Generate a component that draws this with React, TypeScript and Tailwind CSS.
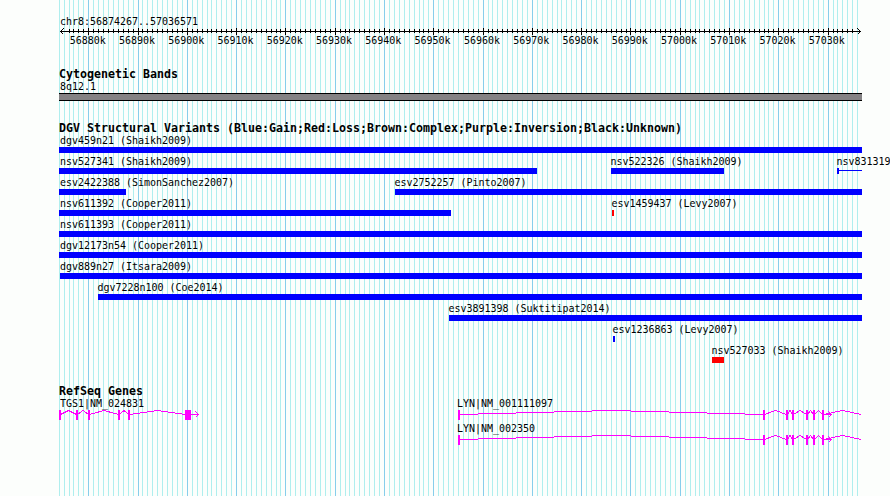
import type { ReactNode } from 'react'

const START = 56874267
const END = 57036571
const LEFT = 60
const PX_PER_BP = 800 / (END - START)

const toX = (pos: number) => Math.round(LEFT + (pos - START) * PX_PER_BP)

// one tick per kilobase, a major one every ten
const ticks: { kb: number; x: number; major: boolean }[] = []
for (let kb = 56874; kb <= 57036; kb++) {
  ticks.push({ kb, x: toX(kb * 1000), major: kb % 10 === 0 })
}

type Variant = {
  label: string
  from: number
  to: number
  loss?: boolean
  thin?: boolean
}

const variantRows: Variant[][] = [
  [{ label: 'dgv459n21 (Shaikh2009)', from: 59, to: 862 }],
  [
    { label: 'nsv527341 (Shaikh2009)', from: 59, to: 537 },
    { label: 'nsv522326 (Shaikh2009)', from: 611, to: 724 },
    { label: 'nsv831319', from: 837, to: 862, thin: true },
  ],
  [
    { label: 'esv2422388 (SimonSanchez2007)', from: 59, to: 126 },
    { label: 'esv2752257 (Pinto2007)', from: 395, to: 862 },
  ],
  [
    { label: 'nsv611392 (Cooper2011)', from: 59, to: 451 },
    { label: 'esv1459437 (Levy2007)', from: 612, to: 614, loss: true },
  ],
  [{ label: 'nsv611393 (Cooper2011)', from: 59, to: 862 }],
  [{ label: 'dgv12173n54 (Cooper2011)', from: 59, to: 862 }],
  [{ label: 'dgv889n27 (Itsara2009)', from: 60, to: 862 }],
  [{ label: 'dgv7228n100 (Coe2014)', from: 98, to: 862 }],
  [{ label: 'esv3891398 (Suktitipat2014)', from: 449, to: 862 }],
  [{ label: 'esv1236863 (Levy2007)', from: 613, to: 615 }],
  [{ label: 'nsv527033 (Shaikh2009)', from: 712, to: 724, loss: true }],
]

type GeneModel = {
  label: string
  exons: [number, number][]
  arrow: number
  tail?: number
}

const lynExons: [number, number][] = [
  [458, 460], [763, 765], [786, 788], [792, 794], [806, 808], [813, 815], [822, 824],
]

const tgs1: GeneModel = {
  label: 'TGS1|NM_024831',
  exons: [[59, 61], [76, 78], [88, 90], [118, 120], [128, 130], [185, 191]],
  arrow: 199,
}

const geneRows: { left?: GeneModel; right: GeneModel }[] = [
  { left: tgs1, right: { label: 'LYN|NM_001111097', exons: lynExons, arrow: 832, tail: 861 } },
  { right: { label: 'LYN|NM_002350', exons: lynExons, arrow: 832, tail: 861 } },
]

function Label({ children }: { children: ReactNode }) {
  return (
    <div className="h-[13px] origin-[0_10px] scale-y-[1.1] text-[10px] leading-[13px] tracking-[-0.02px] whitespace-pre">
      {children}
    </div>
  )
}

function TrackTitle({ children }: { children: ReactNode }) {
  return (
    <h2 className="h-3 text-[11.63px] leading-3 font-bold whitespace-pre">
      {children}
    </h2>
  )
}

function GridLines() {
  return (
    <svg className="absolute inset-0" width="890" height="496" shapeRendering="crispEdges">
      {ticks.map((t) => (
        <rect key={t.kb} x={t.x} y={0} width={1} height={496} fill={t.major ? '#87ceeb' : '#afeeee'} />
      ))}
    </svg>
  )
}

function Ruler() {
  return (
    <div className="flex flex-col pt-[15px]">
      <div className="pl-px">
        <Label>chr8:56874267..57036571</Label>
      </div>
      <svg width="803" height="6" viewBox="59 0 803 6" overflow="visible" shapeRendering="crispEdges">
        <rect x={60} y={3} width={801} height={1} />
        {ticks.slice(2, -1).map((t) => (
          <rect key={t.kb} x={t.x} y={t.major ? 0 : 1} width={1} height={t.major ? 7 : 4} />
        ))}
        <path d="M63.5 0.5L60.5 3.5L63.5 6.5M857.5 0.5L860.5 3.5L857.5 6.5" fill="none" stroke="#000" />
      </svg>
      <div className="flex pl-1">
        {ticks.filter((t) => t.major).map((t) => (
          <div key={t.kb} className="flex w-[49.29px] shrink-0 justify-center">
            <Label>{t.kb}k</Label>
          </div>
        ))}
      </div>
    </div>
  )
}

function VariantGlyph({ variant: v }: { variant: Variant }) {
  return (
    <div className="absolute inset-y-0" style={{ left: v.from - 59, width: v.to - v.from }}>
      <div className={v.from === 59 ? 'pl-px' : v.from > 60 ? '-ml-[0.5px]' : ''}>
        <Label>{v.label}</Label>
      </div>
      {v.thin ? (
        <div className="h-1.5 border-l-2 border-[#0000ff] pt-0.5">
          <div className="h-px bg-[#0000ff]" />
        </div>
      ) : (
        <div className={`h-1.5 ${v.loss ? 'bg-[#ff0000]' : 'bg-[#0000ff]'}`} />
      )}
    </div>
  )
}

function Gene({ gene }: { gene: GeneModel }) {
  const last = gene.exons[gene.exons.length - 1]
  const introns = gene.exons.slice(1).map(([from], i) => [gene.exons[i][1], from])
  if (gene.tail) introns.push([last[1], gene.tail])

  return (
    <g>
      {introns.map(([a, b]) => (
        <polyline
          key={a}
          points={`${a - 0.5},4.5 ${(a + b) / 2},0.5 ${b + 0.5},4.5`}
          fill="none"
          stroke="#ff00ff"
        />
      ))}
      {gene.exons.map(([a, b]) => (
        <rect key={a} x={a} y={0} width={b - a} height={10} fill="#ff00ff" />
      ))}
      <rect x={last[1]} y={4} width={gene.arrow - last[1]} height={1} fill="#ff00ff" />
      <path
        d={`M${gene.arrow - 3.5} 1.5L${gene.arrow - 0.5} 4.5L${gene.arrow - 3.5} 7.5`}
        fill="none"
        stroke="#ff00ff"
      />
    </g>
  )
}

function GeneRow({ left, right }: { left?: GeneModel; right: GeneModel }) {
  return (
    <div className="flex h-[25px] flex-col">
      <div className="flex">
        <div className="w-[398px] pl-px">
          {left && <Label>{left.label}</Label>}
        </div>
        <Label>{right.label}</Label>
      </div>
      <svg width="803" height="10" viewBox="59 0 803 10" shapeRendering="crispEdges">
        {left && <Gene gene={left} />}
        <Gene gene={right} />
      </svg>
    </div>
  )
}

export default function App() {
  return (
    <div className="relative h-[496px] w-[890px] overflow-hidden bg-[#fcfefc] font-['DejaVu_Sans_Mono',monospace] text-black">
      <GridLines />
      <main className="relative ml-[59px] flex w-[803px] flex-col">
        <Ruler />

        <section className="mt-[21px]">
          <TrackTitle>Cytogenetic Bands</TrackTitle>
          <div className="pl-px">
            <Label>8q12.1</Label>
          </div>
          <div className="h-2 border-y border-black bg-[#848284]" />
        </section>

        <section className="mt-[21px]">
          <TrackTitle>DGV Structural Variants (Blue:Gain;Red:Loss;Brown:Complex;Purple:Inversion;Black:Unknown)</TrackTitle>
          {variantRows.map((items) => (
            <div key={items[0].label} className="relative h-[21px]">
              {items.map((v) => (
                <VariantGlyph key={v.label} variant={v} />
              ))}
            </div>
          ))}
        </section>

        <section className="mt-5">
          <TrackTitle>RefSeq Genes</TrackTitle>
          {geneRows.map((row) => (
            <GeneRow key={row.right.label} left={row.left} right={row.right} />
          ))}
        </section>
      </main>
    </div>
  )
}
